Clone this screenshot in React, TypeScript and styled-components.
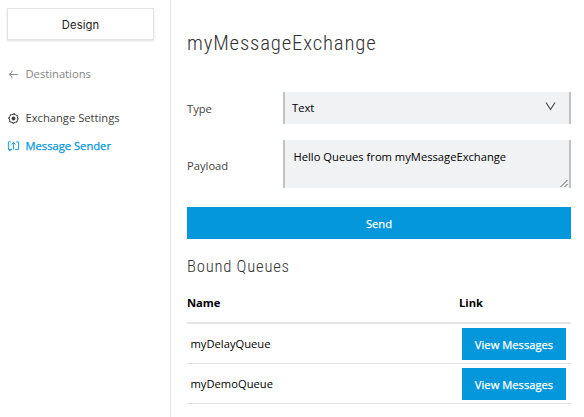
import React from "react";
import styled, { createGlobalStyle } from "styled-components";

const GlobalStyle = createGlobalStyle`
  *, *::before, *::after { box-sizing: border-box; }
  body { margin: 0; background: #fff; color: #000; font: 11.2px/16px "Open Sans", "Noto Sans", sans-serif; }
  button { font: inherit; }
`;

const Page = styled.div`
  display: grid;
  grid-template-columns: 171px 1fr;
  height: 417px;
  overflow: hidden;
`;

const Sidebar = styled.aside`
  border-right: 1px solid #e3e3e3;
  padding: 8px 16px 0 7px;
`;

const DesignButton = styled.button`
  display: block;
  width: 147px;
  height: 32px;
  padding: 2px 0 0;
  border: 1px solid #e3e3e3;
  background: #fff;
  box-shadow: 0 1px 2px rgba(0, 0, 0, 0.12);
  color: #222;
  font: 11.2px/16px Inter, sans-serif;
  letter-spacing: 0.1px;
`;

const NavLink = styled.a<{ $color: string; $gap: number; $active?: boolean }>`
  display: grid;
  grid-template-columns: 12px 1fr;
  column-gap: 6.5px;
  align-items: center;
  height: 16px;
  margin-top: ${(p) => p.$gap}px;
  color: ${(p) => p.$color};
  -webkit-text-stroke: ${(p) => (p.$active ? "0.25px" : "0")};
  white-space: nowrap;
`;

const Icon = styled.svg`
  display: block;
  fill: none;
  stroke: currentColor;
`;

const Main = styled.main`
  padding: 28px 13px 0 16px;
`;

const Title = styled.h1`
  margin: 0;
  height: 32px;
  color: #333;
  font: 300 20.8px/31px Roboto, sans-serif;
  font-stretch: 87.5%;
  letter-spacing: 0.82px;
`;

const Field = styled.div<{ $top: number; $height: number }>`
  display: grid;
  grid-template-columns: 96px 1fr;
  height: ${(p) => p.$height}px;
  margin-top: ${(p) => p.$top}px;
`;

const Label = styled.label<{ $drop: number }>`
  align-self: center;
  padding-top: ${(p) => p.$drop}px;
  color: #444;
`;

const Control = styled.div`
  display: flex;
  justify-content: space-between;
  border: solid #bfc1c3;
  border-width: 0 2px;
  background: #f1f2f4;
`;

const SelectControl = styled(Control)`
  align-items: center;
  padding: 0 13px 0 7px;
`;

const SelectIcon = styled.svg`
  display: block;
  margin-top: -3px;
  fill: none;
  stroke: #444;
`;

const TextControl = styled(Control)`
  padding: 9px 0 0 8.5px;
`;

const Grip = styled(Icon)`
  align-self: flex-end;
`;

const Button = styled.button`
  display: block;
  height: 32px;
  padding: 2px 0 0;
  border: 0;
  background: #0497dc;
  color: #fff;
  -webkit-text-stroke: 0.25px;
`;

const SendButton = styled(Button)`
  width: 100%;
  margin-top: 19px;
`;

const ViewButton = styled(Button)`
  width: 104px;
`;

const Subtitle = styled.h2`
  margin: 16px 0 1px;
  color: #333;
  font: 300 16.7px/23px Roboto, sans-serif;
  font-stretch: 87.5%;
  letter-spacing: 0.75px;
`;

const Row = styled.div`
  display: grid;
  grid-template-columns: 1fr 109px;
  align-items: center;
  height: 40px;
  padding-left: 3.5px;
  border-bottom: 1px solid #e3e3e3;
`;

const HeadRow = styled(Row)`
  grid-template-columns: 1fr 112px;
  height: 45px;
  padding: 4px 0 0;
  border-bottom: 2px solid #e5e5e5;
  font-weight: 700;
`;

const queues = ["myDelayQueue", "myDemoQueue"];

export default function App() {
  return (
    <>
      <GlobalStyle />
      <Page>
        <Sidebar>
          <DesignButton>Design</DesignButton>
          <NavLink $color="#858585" $gap={26}>
            <Icon width="12" height="12" viewBox="0 0 12 12" strokeWidth="0.9">
              <path d="M11.2 6.5H2M5.2 2.5Q4.6 5.7 2 6.5Q4.6 7.3 5.2 10.5" />
            </Icon>
            Destinations
          </NavLink>
          <NavLink $color="#404040" $gap={28}>
            <Icon width="12" height="12" viewBox="0 0 12 12">
              <circle cx="6.5" cy="6.5" r="4.1" />
              <circle cx="6.5" cy="6.5" r="1.9" fill="currentColor" stroke="none" />
              <circle cx="6.5" cy="6.5" r="5" strokeWidth="1" strokeDasharray="1.7 2.227" strokeDashoffset="0.85" />
            </Icon>
            Exchange Settings
          </NavLink>
          <NavLink $color="#0497dc" $gap={12} $active>
            <Icon width="12" height="12" viewBox="0 0 12 12" strokeWidth="0.9">
              <path d="M3.8 1.9H1.4V9.4H5M9.2 1.9H11.5V9.4H8M2.4 9.4V11L4.2 9.4M6.5 9.5V2.8M4.4 4.6L6.5 2.5L8.6 4.6" />
            </Icon>
            Message Sender
          </NavLink>
        </Sidebar>
        <Main>
          <Title>myMessageExchange</Title>
          <Field $top={32} $height={32}>
            <Label $drop={2}>Type</Label>
            <SelectControl>
              <span>Text</span>
              <SelectIcon width="11" height="9" viewBox="0 0 11 9">
                <path d="M1 .5L5.5 7.5L10 .5" strokeWidth="1.1" />
              </SelectIcon>
            </SelectControl>
          </Field>
          <Field $top={16} $height={48}>
            <Label $drop={3}>Payload</Label>
            <TextControl>
              <span>Hello Queues from myMessageExchange</span>
              <Grip width="10" height="9" viewBox="0 0 10 9">
                <path d="M1.5 8L8.5 1M5.5 8L8.5 5" stroke="#444" strokeWidth="0.9" />
              </Grip>
            </TextControl>
          </Field>
          <SendButton>Send</SendButton>
          <Subtitle>Bound Queues</Subtitle>
          <HeadRow>
            <span>Name</span>
            <span>Link</span>
          </HeadRow>
          {queues.map((name) => (
            <Row key={name}>
              <span>{name}</span>
              <ViewButton>View Messages</ViewButton>
            </Row>
          ))}
        </Main>
      </Page>
    </>
  );
}
